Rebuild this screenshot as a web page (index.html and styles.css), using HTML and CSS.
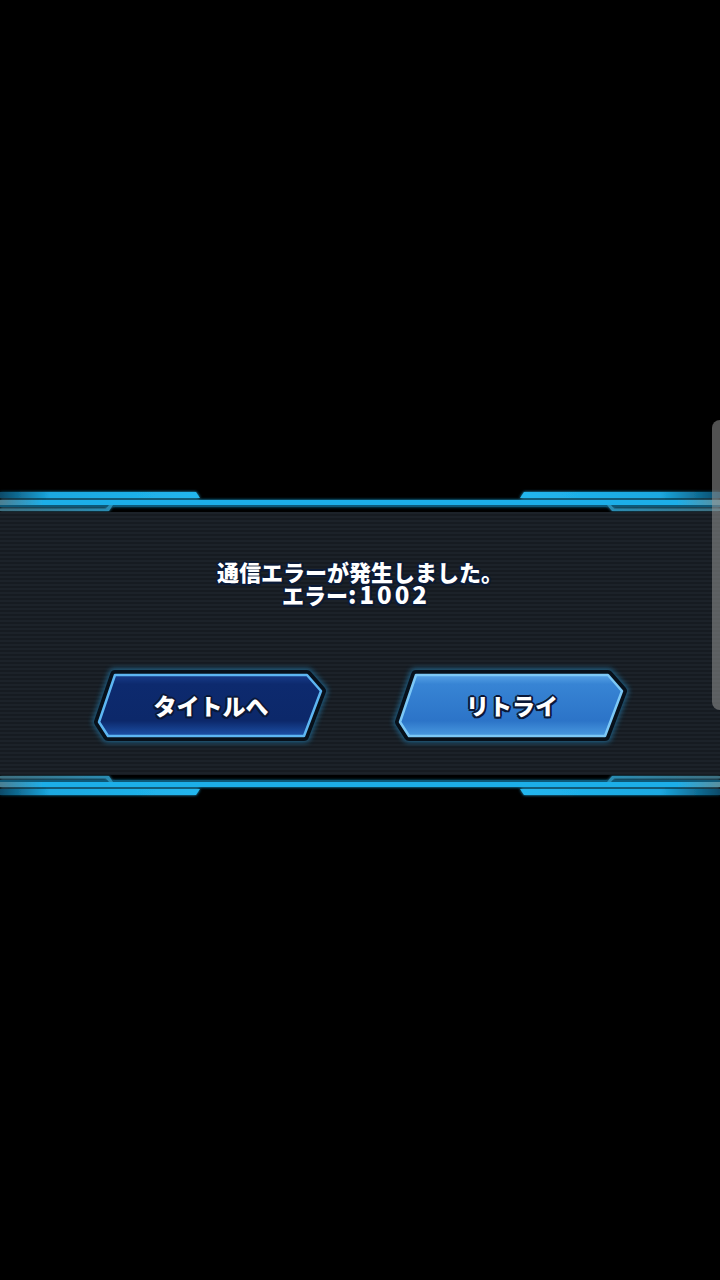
FILE: index.html
```html
<!DOCTYPE html>
<html lang="ja">
<head>
<meta charset="utf-8">
<title>通信エラー</title>
<link rel="stylesheet" href="styles.css">
</head>
<body>
<svg class="defs" width="0" height="0" aria-hidden="true">
  <defs>
    <linearGradient id="segL" x1="0" x2="1" y1="0" y2="0">
      <stop offset="0" stop-color="#0b4a68"/>
      <stop offset="0.25" stop-color="#1ba8e0"/>
      <stop offset="1" stop-color="#22b6ee"/>
    </linearGradient>
    <linearGradient id="segR" x1="0" x2="1" y1="0" y2="0">
      <stop offset="0" stop-color="#22b6ee"/>
      <stop offset="0.7" stop-color="#1ba8e0"/>
      <stop offset="1" stop-color="#0b4a68"/>
    </linearGradient>
    <linearGradient id="lineFull" x1="0" x2="1" y1="0" y2="0">
      <stop offset="0" stop-color="#4b7f92"/>
      <stop offset="0.06" stop-color="#1eaee8"/>
      <stop offset="0.94" stop-color="#1eaee8"/>
      <stop offset="1" stop-color="#5a8f9e"/>
    </linearGradient>
    <linearGradient id="thinL" x1="0" x2="1" y1="0" y2="0">
      <stop offset="0" stop-color="#3e6f80"/>
      <stop offset="1" stop-color="#2a8db4"/>
    </linearGradient>
    <linearGradient id="thinR" x1="0" x2="1" y1="0" y2="0">
      <stop offset="0" stop-color="#2a8db4"/>
      <stop offset="1" stop-color="#3e6f80"/>
    </linearGradient>
    <linearGradient id="fillDark" x1="0" x2="0" y1="0" y2="1">
      <stop offset="0" stop-color="#183c8a"/>
      <stop offset="0.15" stop-color="#0d2a6e"/>
      <stop offset="0.75" stop-color="#0c286a"/>
      <stop offset="1" stop-color="#1d52a8"/>
    </linearGradient>
    <linearGradient id="fillLight" x1="0" x2="0" y1="0" y2="1">
      <stop offset="0" stop-color="#56a2e6"/>
      <stop offset="0.15" stop-color="#3784d4"/>
      <stop offset="0.75" stop-color="#2c74c8"/>
      <stop offset="1" stop-color="#4a9ae0"/>
    </linearGradient>
    <filter id="glow" x="-5%" y="-100%" width="110%" height="300%">
      <feGaussianBlur stdDeviation="1.6" result="b"/>
      <feMerge><feMergeNode in="b"/><feMergeNode in="SourceGraphic"/></feMerge>
    </filter>
    <filter id="btnGlow" x="-10%" y="-20%" width="120%" height="140%">
      <feGaussianBlur stdDeviation="2.5"/>
    </filter>
    <g id="deco">
      <g filter="url(#glow)">
        <polygon points="0,4 196,4 200,10 0,10" fill="url(#segL)"/>
        <polygon points="524,4 720,4 720,10 520,10" fill="url(#segR)"/>
        <rect x="0" y="12" width="720" height="5" fill="url(#lineFull)"/>
        <rect x="0" y="17" width="720" height="2" fill="#0d5878"/>
        <polygon points="0,20.5 106,20.5 109,17 113,17 109,23 0,23" fill="url(#thinL)"/>
        <polygon points="607,17 611,17 614,20.5 720,20.5 720,23 612,23" fill="url(#thinR)"/>
      </g>
    </g>
    <g id="btnShape">
      <polygon points="20,5 212,5 226,21 209,66 13,66 4,52" fill="none" stroke="#2380b4" stroke-width="14" stroke-linejoin="round" opacity="0.6" filter="url(#btnGlow)"/>
      <polygon points="20,5 212,5 226,21 209,66 13,66 4,52" fill="none" stroke="#07101a" stroke-width="10" stroke-linejoin="round"/>
    </g>
  </defs>
</svg>

<main class="screen">
  <section class="dialog">
    <svg class="deco" viewBox="0 0 720 24" width="720" height="24" aria-hidden="true"><use href="#deco"/></svg>
    <div class="panel">
      <p class="msg"><span class="line">通信エラーが発生しました。</span><span class="line">エラー<span class="code">:1002</span></span></p>
      <div class="buttons">
        <button class="btn">
          <svg class="btn-bg" viewBox="0 0 232 70" width="232" height="70" aria-hidden="true">
            <use href="#btnShape"/>
            <polygon points="20,5 212,5 226,21 209,66 13,66 4,52" fill="url(#fillDark)" stroke="#5db6f2" stroke-width="2.5" stroke-linejoin="round"/>
          </svg>
          <span class="btn-label">タイトルへ</span>
        </button>
        <button class="btn">
          <svg class="btn-bg" viewBox="0 0 232 70" width="232" height="70" aria-hidden="true">
            <use href="#btnShape"/>
            <polygon points="20,5 212,5 226,21 209,66 13,66 4,52" fill="url(#fillLight)" stroke="#7cc8f6" stroke-width="2.5" stroke-linejoin="round"/>
          </svg>
          <span class="btn-label">リトライ</span>
        </button>
      </div>
    </div>
    <svg class="deco flip" viewBox="0 0 720 24" width="720" height="24" aria-hidden="true"><use href="#deco"/></svg>
  </section>
  <div class="edge-handle"></div>
</main>
</body>
</html>
```

FILE: styles.css
```css
html, body {
  margin: 0;
  padding: 0;
  background: #000;
}

.defs {
  position: absolute;
  width: 0;
  height: 0;
}

.screen {
  position: relative;
  width: 720px;
  height: 1280px;
  overflow: hidden;
  background: #000;
  font-family: "Noto Sans CJK JP", "Noto Sans", sans-serif;
}

.dialog {
  padding-top: 488px;
  display: flex;
  flex-direction: column;
}

.deco {
  display: block;
  width: 720px;
  height: 24px;
}

.deco.flip {
  transform: scaleY(-1);
}

.panel {
  height: 263px;
  box-sizing: border-box;
  padding-top: 48px;
  display: flex;
  flex-direction: column;
  align-items: center;
  background: repeating-linear-gradient(to bottom, #1c2229 0 2px, #161b21 2px 4px);
}

.msg {
  margin: 0;
  display: flex;
  flex-direction: column;
  align-items: center;
  color: #fff;
  font-size: 22px;
  font-weight: 900;
  text-align: center;
  text-shadow:
    -1.5px -1.5px 0 #0b1a36, 1.5px -1.5px 0 #0b1a36,
    -1.5px 1.5px 0 #0b1a36, 1.5px 1.5px 0 #0b1a36,
    0 -2px 0 #0b1a36, 0 2px 0 #0b1a36,
    -2px 0 0 #0b1a36, 2px 0 0 #0b1a36;
}

.line {
  display: block;
  height: 23px;
  line-height: 22px;
  white-space: nowrap;
}

.line + .line {
  margin-right: 8px;
}

.code {
  font-size: 24px;
  letter-spacing: 3px;
}

.buttons {
  margin-top: 64px;
  margin-left: 3px;
  display: flex;
  gap: 69px;
}

.btn {
  display: grid;
  width: 232px;
  height: 70px;
  padding: 0;
  border: 0;
  background: none;
  font: inherit;
  cursor: pointer;
}

.btn-bg,
.btn-label {
  grid-area: 1 / 1;
}

.btn-bg {
  display: block;
  overflow: visible;
}

.btn-label {
  align-self: center;
  justify-self: center;
  margin-top: 0;
  color: #fff;
  font-size: 23px;
  font-weight: 900;
  line-height: 1;
  text-shadow:
    -1.5px -1.5px 0 #0a1838, 1.5px -1.5px 0 #0a1838,
    -1.5px 1.5px 0 #0a1838, 1.5px 1.5px 0 #0a1838,
    0 -2px 0 #0a1838, 0 2px 0 #0a1838,
    -2px 0 0 #0a1838, 2px 0 0 #0a1838;
}

.edge-handle {
  position: absolute;
  right: 0;
  top: 420px;
  width: 8px;
  height: 290px;
  border-radius: 10px 0 0 10px;
  background: rgba(150, 150, 150, 0.55);
}
```
